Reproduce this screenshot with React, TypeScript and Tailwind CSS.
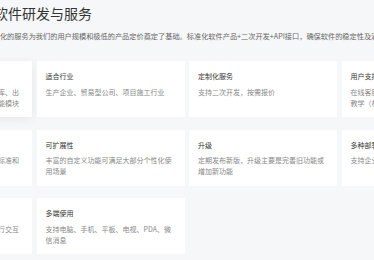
import React from "react";

type Card = { title: string; lines: React.ReactNode; shadow?: boolean } | null;

const cards: Card[] = [
  {
    title: "功能模块",
    lines: "涵盖采购、销售、生产、财务、入库、出库、报表、权限、审批、仓储等功能模块",
    shadow: true,
  },
  { title: "适合行业", lines: "生产企业、贸易型公司、项目施工行业" },
  { title: "定制化服务", lines: "支持二次开发，按需报价" },
  {
    title: "用户支持与培训",
    lines: (
      <>
        在线客服、电话支持、远程协助、上门
        <br />
        教学（视频、文档等）
      </>
    ),
  },
  { title: "规范性", lines: "系统架构设计规范，符合国家行业标准和规范要求" },
  { title: "可扩展性", lines: "丰富的自定义功能可满足大部分个性化使用场景" },
  { title: "升级", lines: "定期发布新版，升级主要是完善旧功能或增加新功能" },
  { title: "多种部署方式", lines: "支持企业私有化部署和云端部署" },
  { title: "系统集成", lines: "支持第三方系统对接，数据实时进行交互" },
  { title: "多端使用", lines: "支持电脑、手机、平板、电视、PDA、微信消息" },
  null,
  null,
];

export default function App() {
  return (
    <div
      className="w-[374px] h-[260px] overflow-hidden bg-[#f6f7f9]"
      style={{ fontFamily: '"Noto Sans CJK SC", "Noto Sans", sans-serif' }}
    >
      <div className="pt-[3px] ml-[-48px] whitespace-nowrap text-[14px] leading-[20px] text-[#333333]">
        标准化软件研发与服务
      </div>
      <div className="mt-[7px] ml-[-72px] whitespace-nowrap text-[7.2px] leading-[12px] text-[#666666]">
        多年的行业经验和专业化的服务为我们的用户规模和极低的产品定价奠定了基础。标准化软件产品+二次开发+API接口，确保软件的稳定性及满足个性化需求。
      </div>
      <div className="mt-[19px] ml-[-116px] grid w-max grid-cols-[repeat(4,148px)] gap-x-[4.5px] gap-y-[12.5px]">
        {cards.map((c, i) =>
          c ? (
            <div
              key={i}
              className={`h-[56px] bg-white px-[9px] pt-[10px] ${
                c.shadow ? "shadow-[0_2px_10px_rgba(0,0,0,0.07)]" : ""
              }`}
            >
              <div className="text-[7px] leading-[11px] text-[#333333] whitespace-nowrap">
                {c.title}
              </div>
              <div className="mt-[4.5px] text-[7px] leading-[11px] text-[#888888]">
                {c.lines}
              </div>
            </div>
          ) : (
            <div key={i} className="h-[56px]" />
          )
        )}
      </div>
    </div>
  );
}
